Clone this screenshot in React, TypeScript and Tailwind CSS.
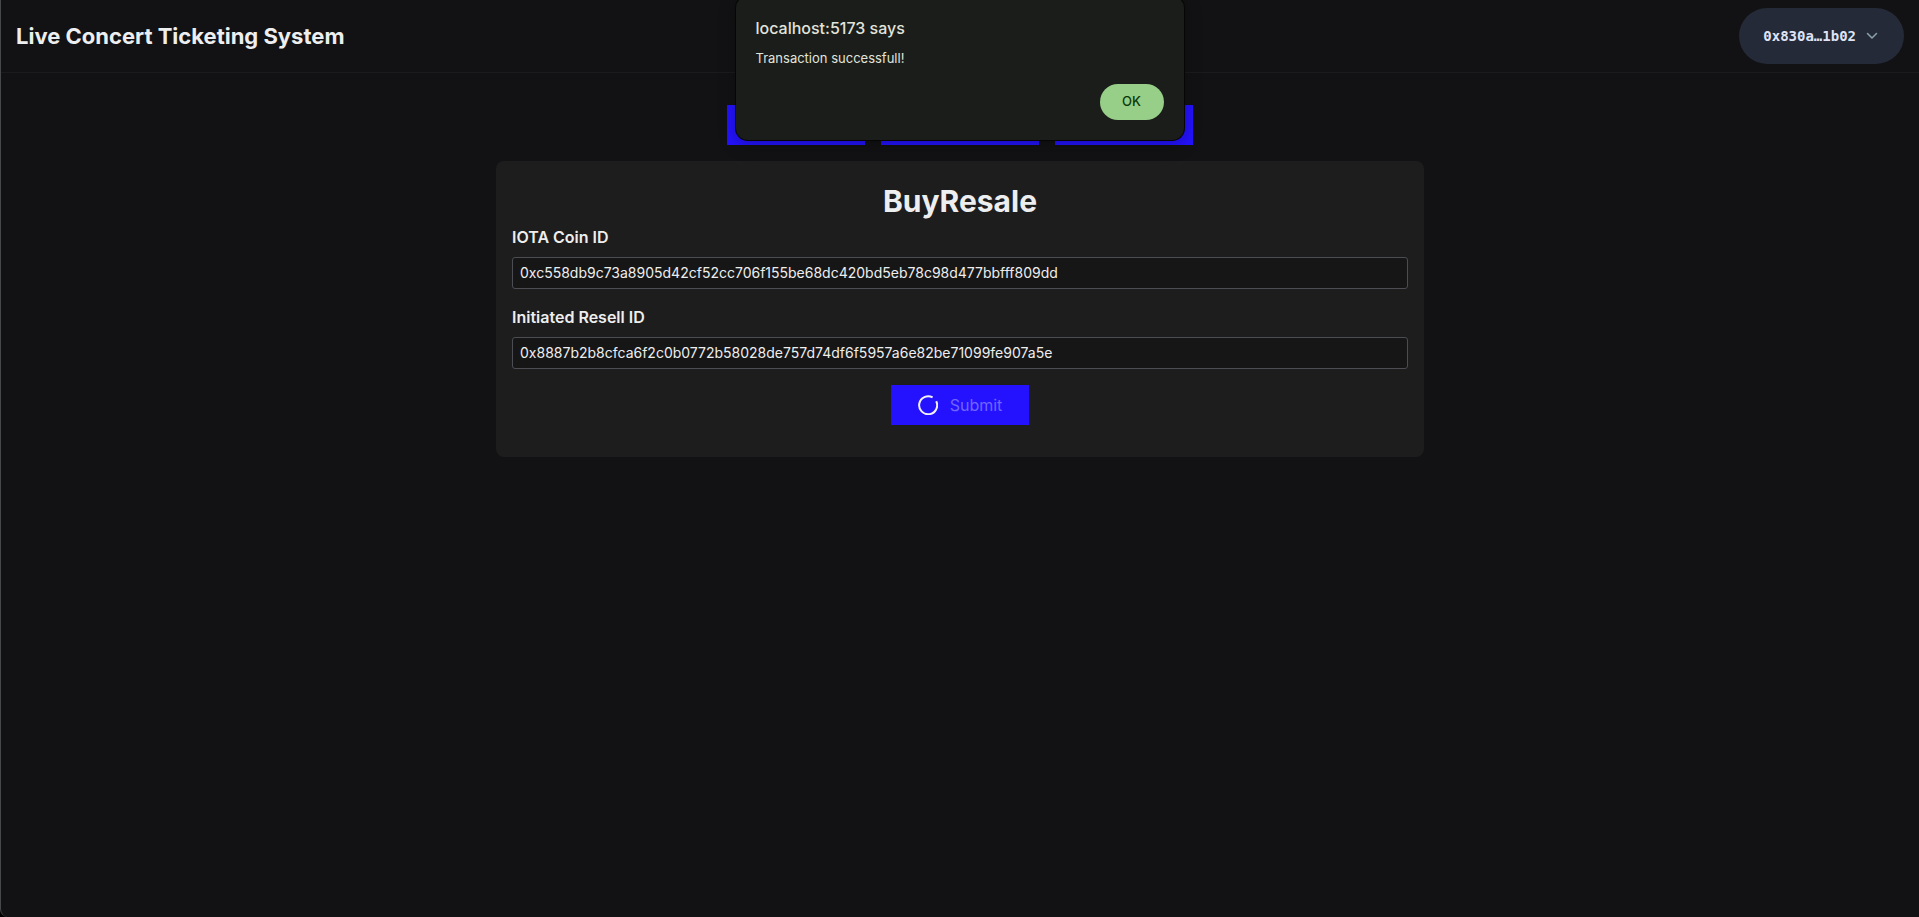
import React from "react"

const tabs = [
  { label: "First page", width: "w-[138px]" },
  { label: "Second page", width: "w-[158px]" },
  { label: "Third page", width: "w-[138px]" },
]

const ChevronIcon = () => (
  <svg className="size-4" viewBox="0 0 16 16" fill="none" aria-hidden="true">
    <path
      d="M3.5 5.5 8 10l4.5-4.5"
      stroke="#8ba3ad"
      strokeWidth="1.5"
      strokeLinecap="round"
      strokeLinejoin="round"
    />
  </svg>
)

const Header = () => (
  <header className="flex items-center justify-between border-b border-[#1b1b1d] px-[15px] py-2">
    <h1 className="text-[22px] leading-8 font-bold text-[#edeef0]">
      Live Concert Ticketing System
    </h1>
    <button
      type="button"
      className="flex h-14 items-center gap-2 rounded-[28px] bg-[#242a38] px-6 font-['DejaVu_Sans_Mono',monospace] text-sm font-bold text-[#dfe3f5]"
    >
      0x830a…1b02
      <ChevronIcon />
    </button>
  </header>
)

const PageNav = () => (
  <nav className="flex justify-center gap-4">
    {tabs.map((tab) => (
      <button
        key={tab.label}
        type="button"
        aria-label={tab.label}
        className={`h-10 bg-[#2412ff] ${tab.width}`}
      />
    ))}
  </nav>
)

interface FieldProps {
  id: string
  label: string
  value: string
}

const Field: React.FC<FieldProps> = ({ id, label, value }) => (
  <div className="mb-4 flex flex-col gap-2">
    <label htmlFor={id} className="text-base leading-6 font-semibold text-[#eeeeee]">
      {label}
    </label>
    <input
      id={id}
      type="text"
      defaultValue={value}
      className="h-8 w-full rounded-[3px] border border-[#4b4d52] bg-[#161616] px-[7px] pb-0.5 text-sm text-[#eeeeee] outline-none"
    />
  </div>
)

const Spinner = () => (
  <svg className="size-5" viewBox="0 0 20 20" fill="none" aria-hidden="true">
    <path
      d="M14.6 2.4A9 9 0 1 0 18.2 6.2"
      stroke="#f2f0ff"
      strokeWidth="2"
    />
  </svg>
)

const AlertDialog = () => (
  <div
    role="alertdialog"
    aria-labelledby="alert-title"
    aria-describedby="alert-message"
    className="absolute -top-1 left-1/2 flex w-[448px] -translate-x-1/2 flex-col rounded-xl bg-[#1b1d1a] p-5 text-[#e1e4da] shadow-[0_0_0_1px_#060606,0_4px_16px_2px_rgba(0,0,0,0.25)]"
  >
    <h2 id="alert-title" className="text-base leading-6 font-medium">
      localhost:5173 says
    </h2>
    <p id="alert-message" className="mt-2 text-[13px] leading-5">
      Transaction successfull!
    </p>
    <button
      type="button"
      className="mt-4 h-9 w-16 self-end rounded-full bg-[#97cf88] text-[13px] font-medium text-[#0b3a08]"
    >
      OK
    </button>
  </div>
)

const App = () => {
  return (
    <div className="relative min-h-screen bg-black font-['Inter','Liberation_Sans',sans-serif]">
      <div className="min-h-screen rounded-bl-lg border-l border-[#47484a] bg-[#121214]">
        <Header />
        <main className="flex flex-col gap-4 px-4 pt-8">
          <PageNav />
          <section className="mx-auto w-full max-w-[928px] rounded-lg bg-[#1d1d1d] px-4 pt-5 pb-8">
            <h2 className="mb-1 text-center text-3xl leading-10 font-bold text-[#edeef0]">
              BuyResale
            </h2>
            <form>
              <Field
                id="coin-id"
                label="IOTA Coin ID"
                value="0xc558db9c73a8905d42cf52cc706f155be68dc420bd5eb78c98d477bbfff809dd"
              />
              <Field
                id="resell-id"
                label="Initiated Resell ID"
                value="0x8887b2b8cfca6f2c0b0772b58028de757d74df6f5957a6e82be71099fe907a5e"
              />
              <button
                type="button"
                disabled
                className="mx-auto flex h-10 w-[138px] items-center justify-center gap-3 bg-[#2412ff] text-base text-[#7165ff]"
              >
                <Spinner />
                Submit
              </button>
            </form>
          </section>
        </main>
      </div>
      <AlertDialog />
    </div>
  )
}

export default App
